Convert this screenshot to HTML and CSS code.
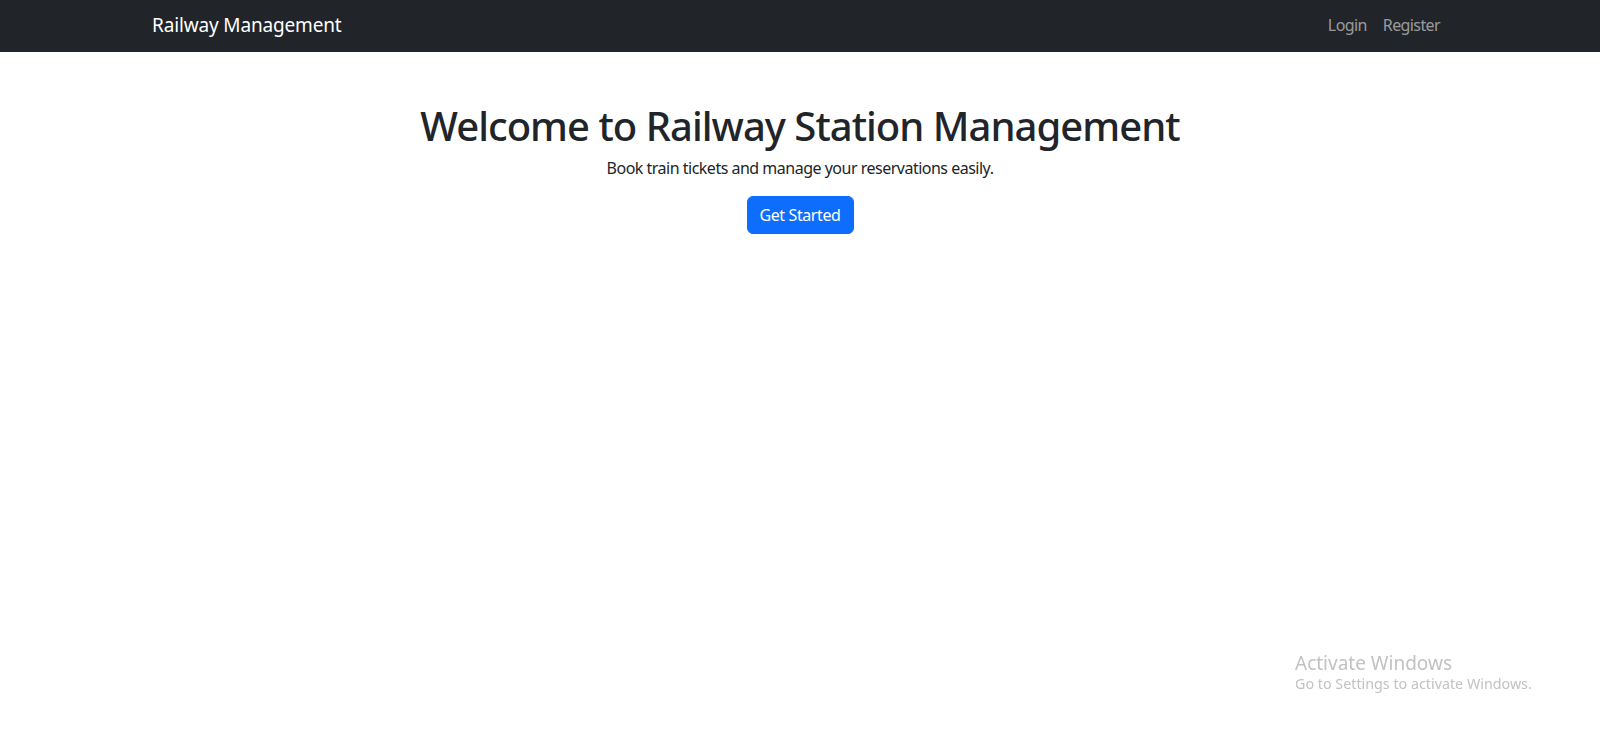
FILE: index.html
```html
<!DOCTYPE html>
<html lang="en">
<head>
<meta charset="utf-8">
<title>Railway Management</title>
<link rel="stylesheet" href="styles.css">
</head>
<body>
<nav class="navbar">
  <div class="container nav-inner">
    <a class="brand" href="#">Railway Management</a>
    <ul class="nav-links">
      <li><a href="#">Login</a></li>
      <li><a href="#">Register</a></li>
    </ul>
  </div>
</nav>
<main class="container hero">
  <h1 class="title">Welcome to Railway Station Management</h1>
  <p class="lead">Book train tickets and manage your reservations easily.</p>
  <a class="btn-primary" href="#">Get Started</a>
</main>
<div class="watermark">
  <div class="wm-title">Activate Windows</div>
  <div class="wm-sub">Go to Settings to activate Windows.</div>
</div>
</body>
</html>
```
FILE: styles.css
```css
* { box-sizing: border-box; }
html, body { margin: 0; padding: 0; }
body {
  font-family: "Noto Sans", "Open Sans", sans-serif;
  font-size: 16px;
  line-height: 1.5;
  color: #212529;
  background: #fff;
}
a { text-decoration: none; }
.container {
  max-width: 1320px;
  margin: 0 auto;
  padding: 0 12px;
}
.navbar {
  background: #212529;
  height: 52px;
  display: flex;
  align-items: center;
}
.nav-inner {
  width: 100%;
  display: flex;
  align-items: center;
  justify-content: space-between;
}
.brand {
  color: #fff;
  font-size: 19px;
  line-height: 30px;
  letter-spacing: -0.15px;
  margin-top: -2px;
}
.nav-links {
  list-style: none;
  margin: -2px 0 0;
  padding: 0;
  display: flex;
}
.nav-links a {
  display: block;
  padding: 8px;
  color: rgba(255,255,255,0.55);
  font-size: 16px;
  line-height: 24px;
  letter-spacing: -0.6px;
}
.hero {
  margin-top: 48px;
  text-align: center;
}
.title {
  margin: 0 0 6px;
  padding-top: 2px;
  font-size: 40px;
  font-weight: 500;
  line-height: 48px;
  letter-spacing: -0.97px;
}
.lead {
  margin: 0 0 16px;
  font-size: 16px;
  line-height: 24px;
  letter-spacing: -0.5px;
}
.btn-primary {
  display: inline-block;
  background: #0d6efd;
  color: #fff;
  border: 1px solid #0d6efd;
  border-radius: 6px;
  padding: 6px 12px;
  font-size: 16px;
  line-height: 24px;
  letter-spacing: -0.4px;
}
.watermark {
  position: fixed;
  left: 1295px;
  top: 652px;
  color: #c2c2c2;
}
.wm-title { font-size: 19px; line-height: 22px; }
.wm-sub { font-size: 14.3px; line-height: 20px; }
```
